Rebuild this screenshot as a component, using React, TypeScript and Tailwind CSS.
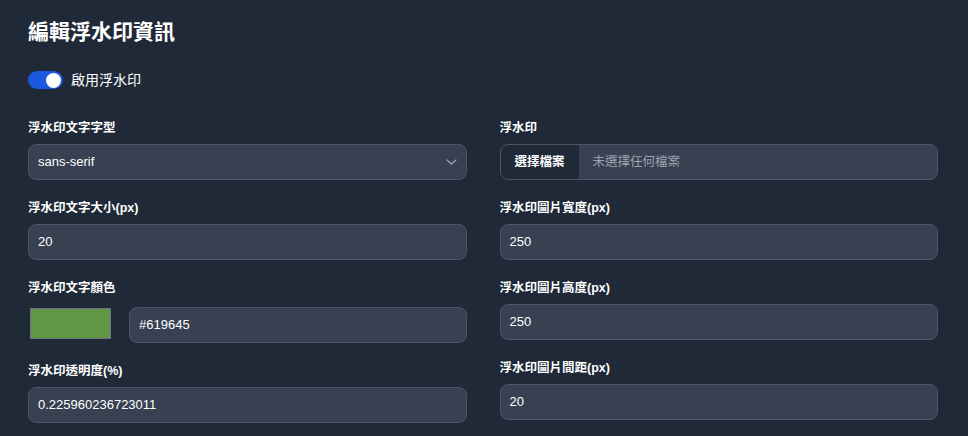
import { useState } from 'react'

const inputCls =
  'w-full h-[36px] rounded-lg border border-[#4b5563] bg-[#374151] px-[9px] text-[13px] text-white outline-none'

function Campo({ label, children }: { label: string; children: React.ReactNode }) {
  return (
    <div className="flex flex-col">
      <p className="mb-[6px] text-[12.5px] font-semibold leading-[20px] text-white">{label}</p>
      {children}
    </div>
  )
}

export default function App() {
  const [activo, setActivo] = useState(true)

  return (
    <div
      className="min-h-screen w-full bg-[#1f2937] pl-[28px] pr-[30px] pt-[18px]"
      style={{ fontFamily: '"Liberation Sans", "Noto Sans CJK TC", sans-serif' }}
    >
      <h1 className="text-[21px] font-bold leading-[28px] text-white">編輯浮水印資訊</h1>

      {/* Interruptor */}
      <div className="mt-[24px] flex h-[20px] items-center gap-[8px]">
        <button
          onClick={() => setActivo(!activo)}
          className={`relative h-[18px] w-[35px] rounded-full ${activo ? 'bg-[#1c58e0]' : 'bg-[#4b5563]'}`}
        >
          <span
            className={`absolute top-[1.5px] h-[15px] w-[15px] rounded-full bg-white ${activo ? 'left-[18px]' : 'left-[2px]'}`}
          />
        </button>
        <span className="text-[14px] text-white">啟用浮水印</span>
      </div>

      <div className="mt-[28px] grid grid-cols-2 gap-x-[33px]">
        {/* Columna izquierda */}
        <div className="flex flex-col gap-[18px]">
          <Campo label="浮水印文字字型">
            <div className={`${inputCls} flex items-center justify-between`}>
              <span>sans-serif</span>
              <svg width="11" height="6" viewBox="0 0 11 6" fill="none">
                <path d="M1 1l4.5 4L10 1" stroke="#9ca3af" strokeWidth="1.3" strokeLinecap="round" strokeLinejoin="round" />
              </svg>
            </div>
          </Campo>
          <Campo label="浮水印文字大小(px)">
            <div className={`${inputCls} flex items-center`}>20</div>
          </Campo>
          <Campo label="浮水印文字顏色">
            <div className="flex h-[39px] items-start gap-[18px] pl-[2px]">
              <div className="mt-[4px] h-[31px] w-[81px] shrink-0 border border-[#6b7280] bg-[#619645]" />
              <div className={`${inputCls} mt-[3px] flex items-center`}>#619645</div>
            </div>
          </Campo>
          <Campo label="浮水印透明度(%)">
            <div className={`${inputCls} flex items-center`}>0.225960236723011</div>
          </Campo>
        </div>

        {/* Columna derecha */}
        <div className="flex flex-col gap-[18px]">
          <Campo label="浮水印">
            <div className="flex h-[36px] w-full overflow-hidden rounded-lg border border-[#4b5563] bg-[#374151] text-[12.5px]">
              <div className="flex w-[78px] items-center justify-center bg-[#1f2937] font-semibold text-white">
                選擇檔案
              </div>
              <div className="flex items-center pl-[14px] text-[#9ca3af]">未選擇任何檔案</div>
            </div>
          </Campo>
          <Campo label="浮水印圖片寬度(px)">
            <div className={`${inputCls} flex items-center`}>250</div>
          </Campo>
          <Campo label="浮水印圖片高度(px)">
            <div className={`${inputCls} flex items-center`}>250</div>
          </Campo>
          <Campo label="浮水印圖片間距(px)">
            <div className={`${inputCls} flex items-center`}>20</div>
          </Campo>
        </div>
      </div>
    </div>
  )
}
